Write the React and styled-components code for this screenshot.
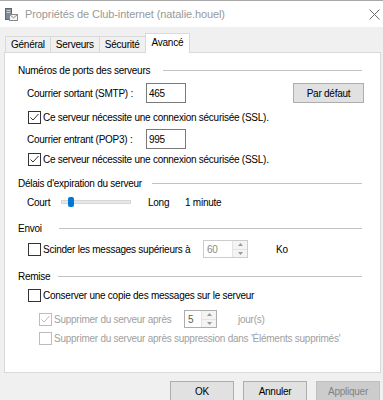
import React from 'react';
import styled, { createGlobalStyle } from 'styled-components';

const Global = createGlobalStyle`
  html, body { margin: 0; padding: 0; background: #f0f0f0; }
  body {
    font-family: "Liberation Sans", Arial, sans-serif;
    font-size: 10px;
    letter-spacing: -0.25px;
    color: #000;
  }
  * { box-sizing: border-box; }
`;

const Window = styled.div`
  width: 383px;
  height: 400px;
  overflow: hidden;
  border-top: 1px solid #a8a8a8;
  background: #f0f0f0;
  display: flex;
  flex-direction: column;
`;

const TitleBar = styled.div`
  height: 26px;
  flex: none;
  background: #fff;
  display: flex;
  align-items: center;
  padding-left: 5px;
  font-size: 11px;
  letter-spacing: -0.1px;
  color: #999;
`;

const TitleIcon = styled.svg`
  width: 13px;
  height: 13px;
  margin-right: 7px;
  flex: none;
`;

const Close = styled.svg`
  width: 11px;
  height: 11px;
  margin-left: auto;
  margin-right: 3px;
`;

const TabStrip = styled.div`
  height: 25px;
  flex: none;
  display: flex;
  align-items: flex-end;
  padding-left: 5px;
`;

const Tab = styled.div`
  height: ${(p) => (p.$active ? 20 : 16)}px;
  margin-bottom: ${(p) => (p.$active ? -1 : 0)}px;
  margin-left: ${(p) => (p.$first ? 0 : -1)}px;
  padding: ${(p) => (p.$active ? '2px 6px 0' : '0 5px')};
  border: 1px solid #d9d9d9;
  border-bottom: none;
  background: ${(p) => (p.$active ? '#fff' : '#f0f0f0')};
  position: relative;
  z-index: ${(p) => (p.$active ? 1 : 0)};
  display: flex;
  align-items: ${(p) => (p.$active ? 'flex-start' : 'center')};
  line-height: 14px;
`;

const Panel = styled.div`
  height: 321px;
  flex: none;
  margin: 0 2px 0 4px;
  border: 1px solid #d9d9d9;
  background: #fff;
  padding: 0 18px 0 13px;
  display: flex;
  flex-direction: column;
`;

const Row = styled.div`
  height: ${(p) => p.$h}px;
  margin-top: ${(p) => p.$mt}px;
  padding-left: ${(p) => p.$indent || 0}px;
  display: flex;
  align-items: center;
  flex: none;
  color: ${(p) => (p.$disabled ? '#a0a0a0' : '#000')};
`;

const HeaderLabel = styled.span`
  flex: none;
`;

const HeaderLine = styled.div`
  flex: 1;
  height: 1px;
  background: #c2c2c2;
  margin-left: ${(p) => p.$gap}px;
`;

const Label = styled.span`
  flex: none;
  width: ${(p) => (p.$w ? `${p.$w}px` : 'auto')};
  margin-left: ${(p) => p.$ml || 0}px;
  white-space: nowrap;
`;

const TextBox = styled.div`
  width: ${(p) => p.$w}px;
  height: 20px;
  border: 1px solid #7a7a7a;
  background: #fff;
  padding-left: 2px;
  display: flex;
  align-items: center;
  flex: none;
`;

const Button = styled.div`
  width: ${(p) => p.$w}px;
  height: ${(p) => p.$h || 21}px;
  flex: none;
  border: 1px solid ${(p) => (p.$disabled ? '#bfbfbf' : '#adadad')};
  background: ${(p) => (p.$disabled ? '#cccccc' : '#e1e1e1')};
  color: ${(p) => (p.$disabled ? '#838383' : '#000')};
  display: flex;
  align-items: center;
  justify-content: center;
  margin-right: ${(p) => p.$mr || 0}px;
  margin-left: ${(p) => (p.$auto ? 'auto' : '0')};
`;

const Box = styled.div`
  width: 13px;
  height: 13px;
  flex: none;
  border: 1px solid ${(p) => (p.$disabled ? '#bcbcbc' : '#333')};
  background: #fff;
  margin-right: 2px;
  display: flex;
  align-items: center;
  justify-content: center;
`;

const Track = styled.div`
  width: 70px;
  height: 4px;
  flex: none;
  background: #e7e7e7;
  border: 1px solid #d6d6d6;
  position: relative;
`;

const Thumb = styled.div`
  position: absolute;
  left: 6px;
  top: -4px;
  width: 6px;
  height: 10px;
  border-radius: 2px;
  background: #0078d7;
`;

const Spinner = styled.div`
  width: ${(p) => p.$w}px;
  height: 18px;
  flex: none;
  margin-left: ${(p) => p.$ml || 0}px;
  border: 1px solid ${(p) => p.$border};
  background: #fff;
  display: flex;
  color: ${(p) => p.$color};
`;

const SpinValue = styled.div`
  flex: 1;
  display: flex;
  align-items: center;
  padding-left: 3px;
`;

const SpinButtons = styled.div`
  width: 15px;
  flex: none;
  display: flex;
  flex-direction: column;
  border-left: 1px solid #e3e3e3;
  background: #f4f4f4;
`;

const SpinHalf = styled.div`
  flex: 1;
  display: flex;
  align-items: center;
  justify-content: center;
  border-top: ${(p) => (p.$lower ? '1px solid #e3e3e3' : 'none')};
`;

const ButtonRow = styled.div`
  display: flex;
  justify-content: flex-end;
  gap: 9px;
  margin-top: 8px;
  padding-right: 3px;
  flex: none;
`;

const Check = ({ color }) => (
  <svg width="11" height="11" viewBox="0 0 11 11">
    <polyline points="1.5,5.5 4,8 9.5,2" fill="none" stroke={color} strokeWidth="1" />
  </svg>
);

const CheckBox = ({ checked, disabled }) => (
  <Box $disabled={disabled}>{checked && <Check color={disabled ? '#bcbcbc' : '#333'} />}</Box>
);

const Arrow = ({ up }) => (
  <svg width="5" height="3" viewBox="0 0 5 3">
    <polygon points={up ? '0,3 5,3 2.5,0' : '0,0 5,0 2.5,3'} fill="#9a9a9a" />
  </svg>
);

const Spin = ({ value, w, ml, border, color }) => (
  <Spinner $w={w} $ml={ml} $border={border} $color={color}>
    <SpinValue>{value}</SpinValue>
    <SpinButtons>
      <SpinHalf>
        <Arrow up />
      </SpinHalf>
      <SpinHalf $lower>
        <Arrow />
      </SpinHalf>
    </SpinButtons>
  </Spinner>
);

const Header = ({ children, gap, mt }) => (
  <Row $h={14} $mt={mt}>
    <HeaderLabel>{children}</HeaderLabel>
    <HeaderLine $gap={gap} />
  </Row>
);

export default function App() {
  return (
    <>
      <Global />
      <Window>
        <TitleBar>
          <TitleIcon viewBox="0 0 13 13">
            <rect x="0.5" y="0.5" width="6" height="11" fill="#7d8a96" stroke="#5d6873" />
            <rect x="1.5" y="2" width="4" height="1" fill="#c9d1d8" />
            <rect x="1.5" y="4" width="4" height="1" fill="#c9d1d8" />
            <rect x="4.5" y="6.5" width="8" height="6" fill="#f4f4f4" stroke="#8a8a8a" />
            <polyline points="4.5,6.5 8.5,9.8 12.5,6.5" fill="none" stroke="#8a8a8a" />
          </TitleIcon>
          Propriétés de Club-internet (natalie.houel)
          <Close viewBox="0 0 11 11">
            <line x1="0.5" y1="0.5" x2="10.5" y2="10.5" stroke="#6b6b6b" strokeWidth="1" />
            <line x1="10.5" y1="0.5" x2="0.5" y2="10.5" stroke="#6b6b6b" strokeWidth="1" />
          </Close>
        </TitleBar>
        <TabStrip>
          <Tab $first>Général</Tab>
          <Tab>Serveurs</Tab>
          <Tab>Sécurité</Tab>
          <Tab $active>Avancé</Tab>
        </TabStrip>
        <Panel>
          <Header mt={10} gap={13}>Numéros de ports des serveurs</Header>
          <Row $h={20} $mt={6} $indent={9}>
            <Label $w={119}>Courrier sortant (SMTP) :</Label>
            <TextBox $w={40}>465</TextBox>
            <Button $w={71} $h={20} $auto $mr={-2}>Par défaut</Button>
          </Row>
          <Row $h={14} $mt={7} $indent={10}>
            <CheckBox checked />
            <Label>Ce serveur nécessite une connexion sécurisée (SSL).</Label>
          </Row>
          <Row $h={20} $mt={5} $indent={9}>
            <Label $w={119}>Courrier entrant (POP3) :</Label>
            <TextBox $w={40}>995</TextBox>
          </Row>
          <Row $h={14} $mt={3} $indent={10}>
            <CheckBox checked />
            <Label>Ce serveur nécessite une connexion sécurisée (SSL).</Label>
          </Row>
          <Header mt={10} gap={10}>Délais d'expiration du serveur</Header>
          <Row $h={20} $mt={2} $indent={9}>
            <Label $w={34}>Court</Label>
            <Track>
              <Thumb />
            </Track>
            <Label $w={37} $ml={17}>Long</Label>
            <Label>1 minute</Label>
          </Row>
          <Header mt={9} gap={17}>Envoi</Header>
          <Row $h={18} $mt={5} $indent={10}>
            <CheckBox />
            <Label $w={160}>Scinder les messages supérieurs à</Label>
            <Spin value="60" w={45} border="#cccccc" color="#8a8a8a" />
            <Label $ml={28}>Ko</Label>
          </Row>
          <Header mt={11} gap={8}>Remise</Header>
          <Row $h={14} $mt={5} $indent={10}>
            <CheckBox />
            <Label>Conserver une copie des messages sur le serveur</Label>
          </Row>
          <Row $h={18} $mt={8} $indent={21} $disabled>
            <CheckBox checked disabled />
            <Label $w={130}>Supprimer du serveur après</Label>
            <Spin value="5" w={33} border="#adadad" color="#5a5a5a" />
            <Label $ml={21}>jour(s)</Label>
          </Row>
          <Row $h={14} $mt={3} $indent={21} $disabled>
            <CheckBox disabled />
            <Label>Supprimer du serveur après suppression dans 'Éléments supprimés'</Label>
          </Row>
        </Panel>
        <ButtonRow>
          <Button $w={64}>OK</Button>
          <Button $w={64}>Annuler</Button>
          <Button $w={64} $disabled>Appliquer</Button>
        </ButtonRow>
      </Window>
    </>
  );
}
